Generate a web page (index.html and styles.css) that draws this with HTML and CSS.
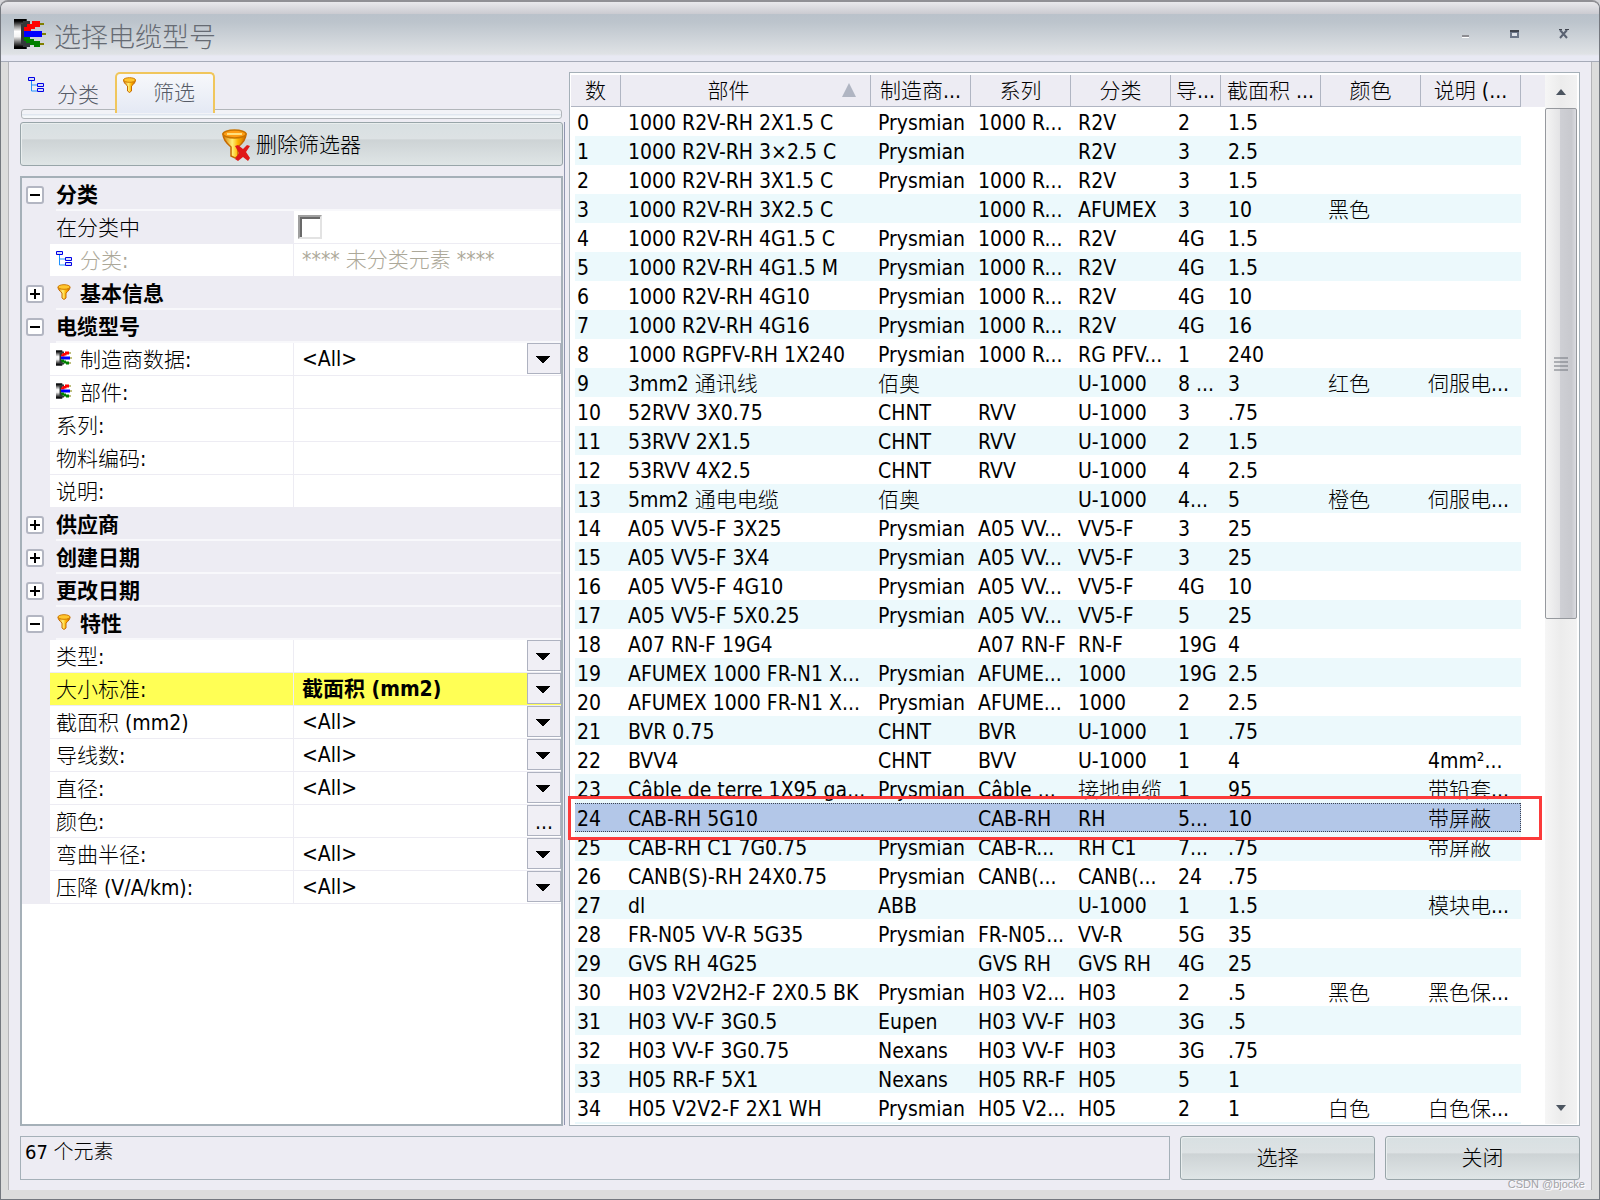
FILE: index.html
```html
<!DOCTYPE html>
<html lang="zh-CN">
<head>
<meta charset="utf-8">
<title>选择电缆型号</title>
<link rel="stylesheet" href="styles.css">
</head>
<body>
<svg class="defs" width="0" height="0" aria-hidden="true">
  <defs>
    <linearGradient id="gold" x1="0" x2="1" y1="0" y2="0">
      <stop offset="0" stop-color="#d87800"/><stop offset=".4" stop-color="#fff07a"/><stop offset=".65" stop-color="#ffb400"/><stop offset="1" stop-color="#c86400"/>
    </linearGradient>
    <linearGradient id="steel" x1="0" x2="0" y1="0" y2="1">
      <stop offset="0" stop-color="#000"/><stop offset=".2" stop-color="#8c8c8c"/><stop offset=".4" stop-color="#fff"/><stop offset=".6" stop-color="#f4f4f4"/><stop offset=".8" stop-color="#777"/><stop offset="1" stop-color="#000"/>
    </linearGradient>
    <symbol id="cable" viewBox="0 0 32 30">
      <path d="M0 0h13v2h3v4h-3v4h-3v10h3v4h3v4h-3v2H0z" fill="#32383a"/>
      <path d="M0 0h12v2H0zM0 28h12v2H0z" fill="#000"/>
      <path d="M0 2h9v3h-2v20h2v3H0z" fill="url(#steel)"/>
      <path d="M10 12V8h3V5h5V2h8v6h-5v2h-4v2z" fill="#f00"/>
      <path d="M10 12h18v6H10z" fill="#00f"/>
      <path d="M10 18h6v2h4v2h6v6h-6v-2h-4v-2h-4v-2h-2z" fill="#008000"/>
      <path d="M26 4h4v2h-4zM28 14h4v2h-4zM26 24h4v2h-4z" fill="#808000"/>
    </symbol>
    <symbol id="tree" viewBox="0 0 16 16">
      <path d="M3.500 4v10H9M3.500 8H9" fill="none" stroke="#1e90ff"/>
      <path d="M.5.5h6v3h-6zM9.500 6.500h6v3h-6zM9.500 11.500h6v3h-6z" fill="#d8dcf8" stroke="#0000e6"/>
    </symbol>
    <symbol id="funnel" viewBox="0 0 13 16">
      <path d="M.5 3c0 2 1.500 4 4 6v5l2 1.500 2-1.500V9c2.500-2 4-4 4-6z" fill="url(#gold)" stroke="#c66a00"/>
      <ellipse cx="6.500" cy="3" rx="6" ry="2.300" fill="#ffc62e" stroke="#d07c00"/>
    </symbol>
    <symbol id="funnel-x" viewBox="0 0 28 32">
      <path d="M1 5c0 4 2 8 8 13v9l4 2 3-2v-9c6-5 8-9 8-13z" fill="url(#gold)" stroke="#c66a00" stroke-width="1.500"/>
      <ellipse cx="12.500" cy="5" rx="11.500" ry="4" fill="#ff9e16" stroke="#c87400" stroke-width="1.500"/>
      <path d="M5 5h15" stroke="#ffe080" stroke-width="2"/>
      <path d="M13 17l3-1 5 4 4-4 3 1-4 6 4 6-2 3-5-4-5 4-3-2 4-6z" fill="#e01818"/>
    </symbol>
  </defs>
</svg>

<div class="window">
  <header class="titlebar">
    <svg class="app-icon"><use href="#cable"/></svg>
    <h1>选择电缆型号</h1>
    <div class="controls">
      <button type="button" aria-label="最小化"><svg width="10" height="10"><path d="M1 6h7v2H1z" fill="#8d8d92"/><path d="M1 8h7v1H1z" fill="#fff"/></svg></button>
      <button type="button" aria-label="最大化"><svg width="10" height="10"><path d="M0 1h9v8H0z" fill="#6c7688"/><path d="M0 1h9v2H0z" fill="#40454f"/><path d="M2 4h5v3H2z" fill="#dfe3ea"/></svg></button>
      <button type="button" aria-label="关闭"><svg width="10" height="10"><path d="M1 1l7 8M8 1L1 9" stroke="#5a6272" stroke-width="2"/><path d="M0 .5h3M6 .5h4" stroke="#40454f"/></svg></button>
    </div>
  </header>

  <main class="body">
    <div class="panes">
      <section class="side">
        <div class="tabs" role="tablist">
          <button type="button" class="tab" role="tab"><svg class="ic16"><use href="#tree"/></svg><span>分类</span></button>
          <button type="button" class="tab active" role="tab" aria-selected="true"><svg class="ic-funnel"><use href="#funnel"/></svg><span>筛选</span></button>
        </div>
        <div class="tab-strip"></div>
        <button type="button" class="btn clear"><svg><use href="#funnel-x"/></svg>删除筛选器</button>

        <form class="props">
          <div class="group"><button type="button" class="toggle open" aria-label="折叠"></button><h2>分类</h2></div>
          <div class="row current"><label for="f1">在分类中</label><div class="val"><input type="checkbox" id="f1"></div></div>
          <div class="row off"><label for="f2"><svg class="ic16"><use href="#tree"/></svg>分类:</label><div class="val"><input type="text" id="f2" value="**** 未分类元素 ****" disabled></div></div>
          <div class="group"><button type="button" class="toggle" aria-label="展开"></button><h2><svg class="ic16"><use href="#funnel"/></svg>基本信息</h2></div>
          <div class="group"><button type="button" class="toggle open" aria-label="折叠"></button><h2>电缆型号</h2></div>
          <div class="row"><label for="f3"><svg class="ic16"><use href="#cable"/></svg>制造商数据:</label><div class="val combo"><select id="f3"><option>&lt;All&gt;</option></select></div></div>
          <div class="row"><label for="f4"><svg class="ic16"><use href="#cable"/></svg>部件:</label><div class="val"><input type="text" id="f4"></div></div>
          <div class="row"><label for="f5">系列:</label><div class="val"><input type="text" id="f5"></div></div>
          <div class="row"><label for="f6">物料编码:</label><div class="val"><input type="text" id="f6"></div></div>
          <div class="row"><label for="f7">说明:</label><div class="val"><input type="text" id="f7"></div></div>
          <div class="group"><button type="button" class="toggle" aria-label="展开"></button><h2>供应商</h2></div>
          <div class="group"><button type="button" class="toggle" aria-label="展开"></button><h2>创建日期</h2></div>
          <div class="group"><button type="button" class="toggle" aria-label="展开"></button><h2>更改日期</h2></div>
          <div class="group"><button type="button" class="toggle open" aria-label="折叠"></button><h2><svg class="ic16"><use href="#funnel"/></svg>特性</h2></div>
          <div class="row"><label for="f8">类型:</label><div class="val combo"><select id="f8"><option></option></select></div></div>
          <div class="row marked"><label for="f9">大小标准:</label><div class="val combo"><select id="f9"><option>截面积 (mm2)</option></select></div></div>
          <div class="row"><label for="f10">截面积 (mm2)</label><div class="val combo"><select id="f10"><option>&lt;All&gt;</option></select></div></div>
          <div class="row"><label for="f11">导线数:</label><div class="val combo"><select id="f11"><option>&lt;All&gt;</option></select></div></div>
          <div class="row"><label for="f12">直径:</label><div class="val combo"><select id="f12"><option>&lt;All&gt;</option></select></div></div>
          <div class="row"><label for="f13">颜色:</label><div class="val"><input type="text" id="f13"><button type="button" class="more">...</button></div></div>
          <div class="row"><label for="f14">弯曲半径:</label><div class="val combo"><select id="f14"><option>&lt;All&gt;</option></select></div></div>
          <div class="row"><label for="f15">压降 (V/A/km):</label><div class="val combo"><select id="f15"><option>&lt;All&gt;</option></select></div></div>
        </form>
      </section>

      <div class="splitter"></div>

      <section class="list">
        <div class="grid">
          <table>
            <colgroup><col class="c50"><col class="c250"><col class="c100"><col class="c100"><col class="c100"><col class="c50"><col class="c100"><col class="c100"><col class="c100"><col></colgroup>
            <thead><tr><th>数</th><th class="sorted">部件<svg width="14" height="14"><path d="M7 0l7 14H0z" fill="#b0b5c2"/></svg></th><th>制造商...</th><th>系列</th><th>分类</th><th>导...</th><th>截面积 ...</th><th>颜色</th><th>说明 (...</th><th class="rest"></th></tr></thead>
            <tbody>
<tr><td>0</td><td>1000 R2V-RH 2X1.5 C</td><td>Prysmian</td><td>1000 R...</td><td>R2V</td><td>2</td><td>1.5</td><td></td><td></td></tr>
<tr><td>1</td><td>1000 R2V-RH 3×2.5 C</td><td>Prysmian</td><td></td><td>R2V</td><td>3</td><td>2.5</td><td></td><td></td></tr>
<tr><td>2</td><td>1000 R2V-RH 3X1.5 C</td><td>Prysmian</td><td>1000 R...</td><td>R2V</td><td>3</td><td>1.5</td><td></td><td></td></tr>
<tr><td>3</td><td>1000 R2V-RH 3X2.5 C</td><td></td><td>1000 R...</td><td>AFUMEX</td><td>3</td><td>10</td><td>黑色</td><td></td></tr>
<tr><td>4</td><td>1000 R2V-RH 4G1.5 C</td><td>Prysmian</td><td>1000 R...</td><td>R2V</td><td>4G</td><td>1.5</td><td></td><td></td></tr>
<tr><td>5</td><td>1000 R2V-RH 4G1.5 M</td><td>Prysmian</td><td>1000 R...</td><td>R2V</td><td>4G</td><td>1.5</td><td></td><td></td></tr>
<tr><td>6</td><td>1000 R2V-RH 4G10</td><td>Prysmian</td><td>1000 R...</td><td>R2V</td><td>4G</td><td>10</td><td></td><td></td></tr>
<tr><td>7</td><td>1000 R2V-RH 4G16</td><td>Prysmian</td><td>1000 R...</td><td>R2V</td><td>4G</td><td>16</td><td></td><td></td></tr>
<tr><td>8</td><td>1000 RGPFV-RH 1X240</td><td>Prysmian</td><td>1000 R...</td><td>RG PFV...</td><td>1</td><td>240</td><td></td><td></td></tr>
<tr><td>9</td><td>3mm2 通讯线</td><td>佰奥</td><td></td><td>U-1000</td><td>8 ...</td><td>3</td><td>红色</td><td>伺服电...</td></tr>
<tr><td>10</td><td>52RVV 3X0.75</td><td>CHNT</td><td>RVV</td><td>U-1000</td><td>3</td><td>.75</td><td></td><td></td></tr>
<tr><td>11</td><td>53RVV 2X1.5</td><td>CHNT</td><td>RVV</td><td>U-1000</td><td>2</td><td>1.5</td><td></td><td></td></tr>
<tr><td>12</td><td>53RVV 4X2.5</td><td>CHNT</td><td>RVV</td><td>U-1000</td><td>4</td><td>2.5</td><td></td><td></td></tr>
<tr><td>13</td><td>5mm2 通电电缆</td><td>佰奥</td><td></td><td>U-1000</td><td>4...</td><td>5</td><td>橙色</td><td>伺服电...</td></tr>
<tr><td>14</td><td>A05 VV5-F 3X25</td><td>Prysmian</td><td>A05 VV...</td><td>VV5-F</td><td>3</td><td>25</td><td></td><td></td></tr>
<tr><td>15</td><td>A05 VV5-F 3X4</td><td>Prysmian</td><td>A05 VV...</td><td>VV5-F</td><td>3</td><td>25</td><td></td><td></td></tr>
<tr><td>16</td><td>A05 VV5-F 4G10</td><td>Prysmian</td><td>A05 VV...</td><td>VV5-F</td><td>4G</td><td>10</td><td></td><td></td></tr>
<tr><td>17</td><td>A05 VV5-F 5X0.25</td><td>Prysmian</td><td>A05 VV...</td><td>VV5-F</td><td>5</td><td>25</td><td></td><td></td></tr>
<tr><td>18</td><td>A07 RN-F 19G4</td><td></td><td>A07 RN-F</td><td>RN-F</td><td>19G</td><td>4</td><td></td><td></td></tr>
<tr><td>19</td><td>AFUMEX 1000 FR-N1 X...</td><td>Prysmian</td><td>AFUME...</td><td>1000</td><td>19G</td><td>2.5</td><td></td><td></td></tr>
<tr><td>20</td><td>AFUMEX 1000 FR-N1 X...</td><td>Prysmian</td><td>AFUME...</td><td>1000</td><td>2</td><td>2.5</td><td></td><td></td></tr>
<tr><td>21</td><td>BVR 0.75</td><td>CHNT</td><td>BVR</td><td>U-1000</td><td>1</td><td>.75</td><td></td><td></td></tr>
<tr><td>22</td><td>BVV4</td><td>CHNT</td><td>BVV</td><td>U-1000</td><td>1</td><td>4</td><td></td><td>4mm²...</td></tr>
<tr><td>23</td><td>Câble de terre 1X95 ga...</td><td>Prysmian</td><td>Câble ...</td><td>接地电缆</td><td>1</td><td>95</td><td></td><td>带铅套...</td></tr>
<tr class="selected"><td>24</td><td>CAB-RH 5G10</td><td></td><td>CAB-RH</td><td>RH</td><td>5...</td><td>10</td><td></td><td>带屏蔽</td></tr>
<tr><td>25</td><td>CAB-RH C1 7G0.75</td><td>Prysmian</td><td>CAB-R...</td><td>RH C1</td><td>7...</td><td>.75</td><td></td><td>带屏蔽</td></tr>
<tr><td>26</td><td>CANB(S)-RH 24X0.75</td><td>Prysmian</td><td>CANB(...</td><td>CANB(...</td><td>24</td><td>.75</td><td></td><td></td></tr>
<tr><td>27</td><td>dl</td><td>ABB</td><td></td><td>U-1000</td><td>1</td><td>1.5</td><td></td><td>模块电...</td></tr>
<tr><td>28</td><td>FR-N05 VV-R 5G35</td><td>Prysmian</td><td>FR-N05...</td><td>VV-R</td><td>5G</td><td>35</td><td></td><td></td></tr>
<tr><td>29</td><td>GVS RH 4G25</td><td></td><td>GVS RH</td><td>GVS RH</td><td>4G</td><td>25</td><td></td><td></td></tr>
<tr><td>30</td><td>H03 V2V2H2-F 2X0.5 BK</td><td>Prysmian</td><td>H03 V2...</td><td>H03</td><td>2</td><td>.5</td><td>黑色</td><td>黑色保...</td></tr>
<tr><td>31</td><td>H03 VV-F 3G0.5</td><td>Eupen</td><td>H03 VV-F</td><td>H03</td><td>3G</td><td>.5</td><td></td><td></td></tr>
<tr><td>32</td><td>H03 VV-F 3G0.75</td><td>Nexans</td><td>H03 VV-F</td><td>H03</td><td>3G</td><td>.75</td><td></td><td></td></tr>
<tr><td>33</td><td>H05 RR-F 5X1</td><td>Nexans</td><td>H05 RR-F</td><td>H05</td><td>5</td><td>1</td><td></td><td></td></tr>
<tr><td>34</td><td>H05 V2V2-F 2X1 WH</td><td>Prysmian</td><td>H05 V2...</td><td>H05</td><td>2</td><td>1</td><td>白色</td><td>白色保...</td></tr>
<tr><td></td><td></td><td></td><td></td><td></td><td></td><td></td><td></td><td></td></tr>
            </tbody>
          </table>
        </div>
        <div class="scrollbar">
          <button type="button" aria-label="向上滚动"><svg width="10" height="6"><path d="M5 0l5 6H0z" fill="#4c5560"/></svg></button>
          <div class="track"><div class="thumb"><svg width="14" height="14"><path d="M0 1h14M0 5h14M0 9h14M0 13h14" stroke="#70747c"/></svg></div></div>
          <button type="button" aria-label="向下滚动"><svg width="10" height="6"><path d="M0 0h10L5 6z" fill="#4c5560"/></svg></button>
        </div>
        <div class="highlight"></div>
      </section>
    </div>

    <footer class="foot">
      <div class="status">67 个元素</div>
      <button type="button" class="btn">选择</button>
      <button type="button" class="btn">关闭</button>
    </footer>
  </main>
  <div class="watermark">CSDN @bjocke</div>
</div>
</body>
</html>
```

FILE: styles.css
```css
*, ::before, ::after { box-sizing: border-box; }

body {
  margin: 0;
  background: #d4d4d8;
  color: #000;
  font: 300 21px/29px "DejaVu Sans Condensed", "Noto Sans CJK SC", sans-serif;
}

button, input, select { font: inherit; color: inherit; margin: 0; }
button { padding: 0; }
svg { display: block; flex: none; }
.defs { position: absolute; }

.window {
  position: relative;
  display: flex;
  flex-direction: column;
  height: 100vh;
  border: 1px solid #74787f;
  border-top: 2px solid #909095;
  border-radius: 8px 8px 0 0;
  background: #dcdcdc;
  overflow: hidden;
}

/* title bar */
.titlebar {
  flex: none;
  display: flex;
  align-items: center;
  gap: 8px;
  height: 60px;
  padding: 4px 20px 0 13px;
  border-bottom: 1px solid #a6abb8;
  background: linear-gradient(#e9e9ec 0, #cbcbd1 12px, #bac2cb 12px, #bcc4cc 20px, #dfe2e5 52px, #e8e9f3 54px);
}
.app-icon { width: 32px; height: 30px; }
.titlebar h1 {
  flex: 1;
  margin: 0;
  padding-top: 8px;
  font-size: 27px;
  line-height: 32px;
  font-weight: 300;
  color: #666b73;
}
.controls { display: flex; gap: 19px; }
.controls button {
  display: grid;
  place-items: center;
  width: 30px;
  height: 30px;
  border: 0;
  background: none;
}

/* dialog body */
.body {
  flex: 1;
  min-height: 0;
  display: flex;
  flex-direction: column;
  gap: 10px;
  margin: 0 7px 9px;
  padding: 10px 11px 10px;
  border: solid #b4b4b8;
  border-width: 0 1px;
  background: #edecf3;
}
.panes { flex: 1; min-height: 0; display: flex; }

.side {
  flex: 0 0 543px;
  min-width: 0;
  display: flex;
  flex-direction: column;
}
.tabs { display: flex; height: 40px; padding-left: 4px; color: #565b66; z-index: 1; }
.tab {
  display: flex;
  gap: 13px;
  padding: 5px 4px 0;
  border: 0;
  background: none;
}
.tab span { padding-top: 4px; }
.tab.active {
  width: 100px;
  height: 41px;
  margin-left: 12px;
  padding: 3px 6px 0;
  gap: 17px;
  border: 2px solid #f0c65c;
  border-bottom: 0;
  border-radius: 5px 5px 0 0;
  background: linear-gradient(#f7f8fb, #e4e9f4);
}
.tab.active span { padding-top: 2px; }
.ic16 { width: 16px; height: 16px; }
.ic-funnel { width: 13px; height: 16px; }
.tab-strip {
  flex: none;
  height: 10px;
  margin: -3px 1px 3px;
  border: 1px solid #b2b6ba;
  border-radius: 3px;
  background: linear-gradient(#f2f3f7 45%, #d6dfea 45%, #f5f8fa 80%);
}
.btn {
  display: flex;
  align-items: center;
  justify-content: center;
  height: 44px;
  border: 1px solid #98a5a9;
  border-radius: 3px;
  background: linear-gradient(#d8e0e2, #dde2e4 38%, #cdd3d5 40%, #dfe5e6);
  box-shadow: inset 1px 1px #e9eeee;
}
.clear { flex: none; gap: 6px; padding-top: 2px; }
.clear svg { width: 28px; height: 32px; }

/* property tree */
.props {
  flex: 1;
  min-height: 0;
  overflow: hidden;
  margin-top: 10px;
  border: 2px solid #a5b0b8;
  background: #fff;
}
.group, .row { display: flex; height: 33px; background: #edecf3; }
.group { align-items: center; padding-left: 4px; }
.group h2 {
  flex: 1;
  display: flex;
  gap: 8px;
  height: 33px;
  margin: 0 0 0 12px;
  font-size: 21px;
  line-height: 34px;
  border-bottom: 2px solid #f8f8fb;
}
.group .ic16, .row .ic16 { margin-top: 7px; }
.toggle {
  width: 18px;
  height: 18px;
  border: 2px solid #b3b6c2;
  border-radius: 3px;
  background:
    linear-gradient(#000, #000) center / 10px 2px no-repeat,
    linear-gradient(#000, #000) center / 2px 10px no-repeat,
    #fff;
}
.toggle.open { background: linear-gradient(#000, #000) center / 10px 2px no-repeat, #fff; }
.row { padding-left: 28px; gap: 1px; border-bottom: 1px solid #edecf3; }
.row label {
  flex: 0 0 243px;
  display: flex;
  gap: 8px;
  padding-left: 6px;
  line-height: 34px;
  background: #fff;
}
.row.current label { background: #edecf3; }
.val { flex: 1; min-width: 0; display: flex; background: #fff; }
.val input[type="text"], .val select {
  flex: 1;
  min-width: 0;
  padding: 1px 8px 0;
  border: 0;
  background: none;
  appearance: none;
  outline: 0;
}
.val input[type="checkbox"] {
  appearance: none;
  width: 24px;
  height: 24px;
  margin: 4px;
  border: 2px solid;
  border-color: #a0a0a0 #e3e3e3 #e3e3e3 #a0a0a0;
  box-shadow: inset 2px 2px #696969;
  background: #fff;
}
.off label, .off input { color: #aca899; }
.combo::after, .more {
  flex: none;
  width: 34px;
  height: 31px;
  border: 1px solid #aeb2c0;
  background: #f0eff5;
}
.combo::after {
  content: "";
  background:
    linear-gradient(to bottom right, #000 50%, transparent 51%) 15px 12px / 7px 7px no-repeat,
    linear-gradient(to bottom left, #000 50%, transparent 51%) 8px 12px / 7px 7px no-repeat,
    #f0eff5;
}
.more { line-height: 29px; text-align: center; padding-top: 2px; }
.marked label, .marked .val { background: #ffff55; }
.marked select { font-weight: 700; }

.splitter {
  flex: none;
  width: 2px;
  margin: 50px 4px 1px 0;
  border-right: 1px solid #9096b0;
}

/* part list */
.list {
  position: relative;
  flex: 1;
  min-width: 0;
  display: flex;
  padding: 2px 2px 1px 1px;
  border: 1px solid #a5b0b8;
  background: #fff;
}
.grid { flex: 1; min-width: 0; overflow: hidden; }
table { width: 100%; table-layout: fixed; border-collapse: separate; border-spacing: 0; }
.c50 { width: 50px; }
.c100 { width: 100px; }
.c250 { width: 250px; }
th {
  height: 32px;
  padding: 2px 0 0;
  border: solid #b0b5c2;
  border-width: 0 1px 1px 0;
  background: #edecf3;
  font-weight: 300;
  line-height: 29px;
  white-space: nowrap;
}
th.rest { border: 0; }
th.sorted { position: relative; padding-right: 34px; }
th.sorted svg { position: absolute; right: 14px; top: 8px; }
td {
  height: 29px;
  padding: 3px 0 0 7px;
  line-height: 26px;
  white-space: nowrap;
  overflow: hidden;
}
td:first-child { padding-left: 2px; border-left: 4px solid #fff; }
tbody tr:nth-child(even) td { background: #ecf9fc; }
tbody tr.selected td {
  background:
    repeating-linear-gradient(90deg, #3b424f 0 1px, transparent 1px 2px) top / 100% 1px no-repeat,
    repeating-linear-gradient(90deg, #3b424f 0 1px, transparent 1px 2px) bottom / 100% 1px no-repeat,
    #b3c7e8;
}
tbody tr.selected td:last-child { border-right: 1px dotted #3b424f; }

.scrollbar {
  flex: 0 0 32px;
  display: flex;
  flex-direction: column;
  background: linear-gradient(90deg, #f6f6f6, #ececec 50%, #f2f2f2);
}
.scrollbar button {
  display: grid;
  place-items: center;
  height: 33px;
  border: 0;
  background: none;
}
.track { flex: 1; min-height: 0; }
.thumb {
  display: grid;
  place-items: center;
  height: 52%;
  border: 1px solid #96999e;
  border-radius: 2px;
  background: linear-gradient(90deg, #f4f4f4, #e4e4e6 45%, #cfd0d5 46%, #c8c9ce 85%, #dadbe0);
}
.highlight {
  position: absolute;
  left: -2px;
  right: 37px;
  top: 723px;
  height: 44px;
  border: 3px solid #fb3a3a;
  pointer-events: none;
}

/* footer */
.foot { flex: none; display: flex; gap: 10px; }
.status { flex: 1; padding: 1px 4px; border: 1px solid #a5b0b8; font-size: 20px; line-height: 29px; }
.foot .btn { flex: 0 0 195px; }

.watermark {
  position: absolute;
  right: 14px;
  bottom: 7px;
  color: #a2a2a6;
  font: 11px/16px "Liberation Sans", sans-serif;
  text-shadow: 1px 1px #fff;
}
```
